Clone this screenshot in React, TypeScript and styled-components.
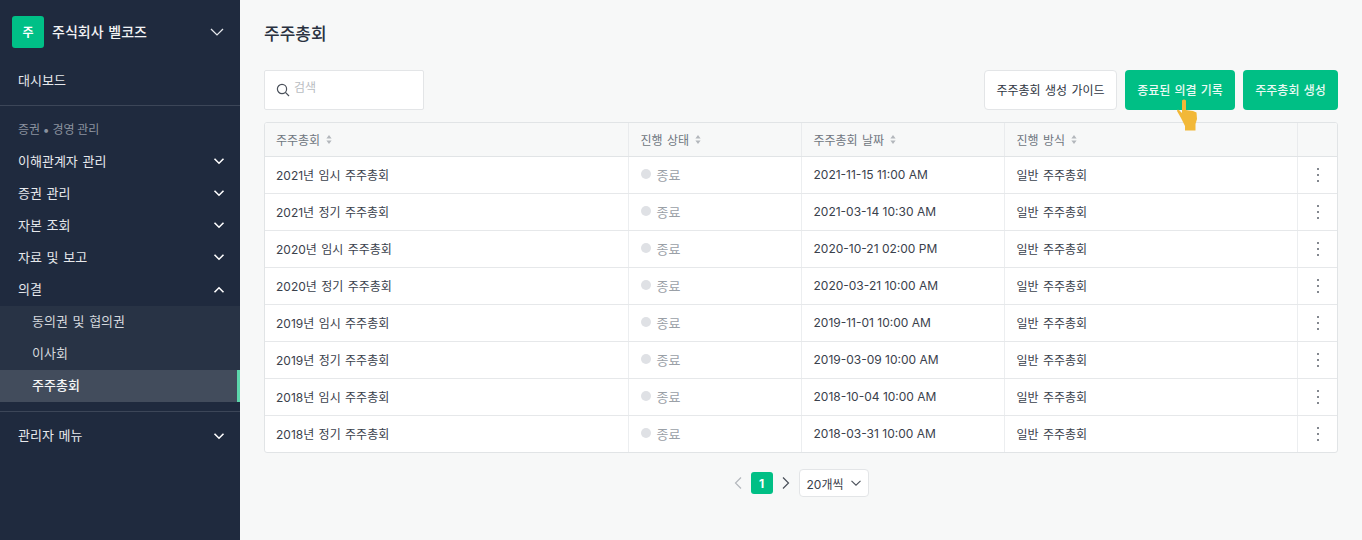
import React from "react";
import styled, { createGlobalStyle } from "styled-components";

const Global = createGlobalStyle`
  html, body { margin: 0; padding: 0; height: 100%; }
  body { background: #f7f8f8; font-family: Inter, "Noto Sans CJK KR", "Noto Sans", sans-serif; overflow: hidden; word-spacing: 1px; }
  * { box-sizing: border-box; }
`;

const Page = styled.div`
  display: flex;
  width: 1362px;
  height: 540px;
  overflow: hidden;
`;

const Sidebar = styled.aside`
  width: 240px;
  flex: none;
  background: #1f2a3e;
  color: #fff;
  display: flex;
  flex-direction: column;
`;

const Brand = styled.div`
  height: 64px;
  padding: 0 15px 0 12px;
  display: flex;
  align-items: center;
`;

const BrandMark = styled.div`
  width: 32px;
  height: 32px;
  border-radius: 3px;
  background: #00c087;
  color: #fff;
  font-size: 12px;
  font-weight: 700;
  padding-bottom: 2px;
  display: flex;
  align-items: center;
  justify-content: center;
`;

const BrandName = styled.div`
  margin-left: 8px;
  flex: 1;
  font-size: 14px;
  font-weight: 500;
  color: #f2f3f5;
  padding-bottom: 3px;
`;

const MenuRow = styled.div<{ $h?: number; $gap?: number }>`
  height: ${(p) => p.$h ?? 32}px;
  margin-bottom: ${(p) => p.$gap ?? 0}px;
  padding: 0 15px 2px 18px;
  display: flex;
  align-items: center;
  justify-content: space-between;
  font-size: 13px;
  color: #e6e8ec;
  svg { margin-top: 2px; }
`;

const Divider = styled.div`
  height: 1px;
  background: #3c4658;
`;

const GroupLabel = styled.div`
  height: 39px;
  padding-top: 15px;
  padding-left: 18px;
  font-size: 12px;
  line-height: 18px;
  color: #8b929e;
  word-spacing: -0.6px;
`;

const SubPanel = styled.div`
  background: #283345;
  margin-bottom: 9px;
`;

const SubRow = styled.div<{ $active?: boolean }>`
  height: 32px;
  padding-left: 32px;
  padding-bottom: 4px;
  display: flex;
  align-items: center;
  font-size: 13px;
  font-weight: ${(p) => (p.$active ? 500 : 400)};
  color: ${(p) => (p.$active ? "#f5f6f7" : "#d5d8dd")};
  background: ${(p) => (p.$active ? "#424c5c" : "transparent")};
  border-right: ${(p) => (p.$active ? "3px solid #5cd6ab" : "none")};
`;

const Main = styled.main`
  flex: 1;
  padding: 0 24px;
  min-width: 0;
`;

const Title = styled.h1`
  margin: 0;
  height: 70px;
  padding-top: 21px;
  font-size: 17px;
  line-height: 26px;
  font-weight: 500;
  color: #2a3240;
`;

const Toolbar = styled.div`
  height: 40px;
  display: flex;
  align-items: center;
  justify-content: space-between;
  margin-bottom: 12px;
`;

const Search = styled.div`
  width: 160px;
  height: 40px;
  background: #fff;
  border: 1px solid #e3e5e7;
  border-radius: 2px;
  padding: 0 0 0 11px;
  display: flex;
  align-items: center;
`;

const Placeholder = styled.span`
  margin-left: 4px;
  margin-top: -7px;
  font-size: 12px;
  color: #b9bdc2;
`;

const Actions = styled.div`
  display: flex;
  gap: 8px;
`;

const Button = styled.div<{ $primary?: boolean; $w: number }>`
  position: relative;
  width: ${(p) => p.$w}px;
  height: 40px;
  border-radius: 4px;
  display: flex;
  align-items: center;
  justify-content: center;
  font-size: 12px;
  white-space: nowrap;
  padding-bottom: 2px;
  font-weight: ${(p) => (p.$primary ? 500 : 400)};
  color: ${(p) => (p.$primary ? "#eafaf4" : "#2f3642")};
  background: ${(p) => (p.$primary ? "#00bf85" : "#fff")};
  border: ${(p) => (p.$primary ? "none" : "1px solid #e3e5e7")};
`;

const Cursor = styled.svg`
  position: absolute;
  left: 51px;
  top: 29px;
  width: 22px;
  height: 32px;
`;

const TableWrap = styled.div`
  border: 1px solid #e1e4e6;
  border-radius: 3px;
  overflow: hidden;
  background: #fff;
  width: 1074px;
`;

const Table = styled.table`
  width: 1072px;
  border-collapse: collapse;
  table-layout: fixed;
`;

const Th = styled.th`
  height: 33px;
  padding: 0 0 0 12px;
  background: #f7f8f8;
  text-align: left;
  font-size: 12px;
  font-weight: 400;
  color: #6f7680;
  border-bottom: 1px solid #e1e4e6;
  border-right: 1px solid #e9ebed;
  &:first-child { padding-left: 11px; }
  &:last-child { border-right: none; }
`;

const Td = styled.td`
  height: 37px;
  padding: 0 0 1px 12px;
  font-size: 12px;
  color: #3a414c;
  border-bottom: 1px solid #e6e8ea;
  border-right: 1px solid #eceef0;
  white-space: nowrap;
  &:first-child { padding-left: 11px; }
  &:last-child { border-right: none; padding: 0 0 0 1px; }
  tr:last-child & { border-bottom: none; }
`;

const DateText = styled.span`
  word-spacing: 0;
`;

const HeadLabel = styled.span`
  display: inline-flex;
  align-items: center;
  gap: 6px;
`;

const Status = styled.span`
  display: inline-flex;
  align-items: center;
  gap: 6px;
  font-size: 13px;
  color: #9aa0a7;
`;

const Dot = styled.span`
  width: 10px;
  height: 10px;
  border-radius: 50%;
  background: #dfe1e5;
`;

const MoreCell = styled.div`
  display: flex;
  justify-content: center;
`;

const Pager = styled.div`
  margin-top: 16px;
  display: flex;
  align-items: center;
  justify-content: center;
  height: 28px;
  padding-right: 2px;
`;

const PageNum = styled.div`
  width: 22px;
  height: 22px;
  margin: 0 7px;
  border-radius: 3px;
  background: #00bf85;
  color: #fff;
  font-size: 12px;
  font-weight: 700;
  display: flex;
  align-items: center;
  justify-content: center;
`;

const PageSize = styled.div`
  margin-left: 7px;
  width: 70px;
  height: 28px;
  background: #fff;
  border: 1px solid #e3e5e7;
  border-radius: 4px;
  padding: 0 6px 0 7px;
  display: flex;
  align-items: center;
  justify-content: space-between;
  font-size: 12px;
  color: #3a414c;
  word-spacing: 0;
`;

const Chevron = ({ up, size = 12, color = "#fff", w = 1.6 }: { up?: boolean; size?: number; color?: string; w?: number }) => (
  <svg width={size} height={size} viewBox="0 0 12 12" fill="none">
    <path d={up ? "M1.5 8.2L6 3.8l4.5 4.4" : "M1.5 3.8L6 8.2l4.5-4.4"} stroke={color} strokeWidth={w} />
  </svg>
);

const SortIcon = () => (
  <svg width="6" height="9" viewBox="0 0 6 9">
    <path d="M3 0l2.6 3.4H.4z M3 9L.4 5.6h5.2z" fill="#b3b7bc" />
  </svg>
);

const More = () => (
  <svg width="4" height="16" viewBox="0 0 4 16">
    <circle cx="2" cy="2" r="1" fill="#5b616a" />
    <circle cx="2" cy="8" r="1" fill="#5b616a" />
    <circle cx="2" cy="14" r="1" fill="#5b616a" />
  </svg>
);

const rows = [
  ["2021년 임시 주주총회", "2021-11-15 11:00 AM"],
  ["2021년 정기 주주총회", "2021-03-14 10:30 AM"],
  ["2020년 임시 주주총회", "2020-10-21 02:00 PM"],
  ["2020년 정기 주주총회", "2020-03-21 10:00 AM"],
  ["2019년 임시 주주총회", "2019-11-01 10:00 AM"],
  ["2019년 정기 주주총회", "2019-03-09 10:00 AM"],
  ["2018년 임시 주주총회", "2018-10-04 10:00 AM"],
  ["2018년 정기 주주총회", "2018-03-31 10:00 AM"],
];

const menus = ["이해관계자 관리", "증권 관리", "자본 조회", "자료 및 보고"];
const heads = ["주주총회", "진행 상태", "주주총회 날짜", "진행 방식"];

export default function App() {
  return (
    <Page>
      <Global />
      <Sidebar>
        <Brand>
          <BrandMark>주</BrandMark>
          <BrandName>주식회사 벨코즈</BrandName>
          <Chevron size={16} w={1} color="#e6e8ec" />
        </Brand>
        <MenuRow $gap={9}>대시보드</MenuRow>
        <Divider />
        <GroupLabel>증권 • 경영 관리</GroupLabel>
        {menus.map((m) => (
          <MenuRow key={m}>
            {m}
            <Chevron />
          </MenuRow>
        ))}
        <MenuRow $h={33}>
          의결
          <Chevron up />
        </MenuRow>
        <SubPanel>
          <SubRow>동의권 및 협의권</SubRow>
          <SubRow>이사회</SubRow>
          <SubRow $active>주주총회</SubRow>
        </SubPanel>
        <Divider />
        <MenuRow $h={47}>
          관리자 메뉴
          <Chevron />
        </MenuRow>
      </Sidebar>
      <Main>
        <Title>주주총회</Title>
        <Toolbar>
          <Search>
            <svg width="14" height="14" viewBox="0 0 14 14" fill="none">
              <circle cx="6" cy="6" r="4.6" stroke="#4a505a" strokeWidth="1.2" />
              <path d="M9.4 9.4L13 13" stroke="#4a505a" strokeWidth="1.2" />
            </svg>
            <Placeholder>검색</Placeholder>
          </Search>
          <Actions>
            <Button $w={133}>주주총회 생성 가이드</Button>
            <Button $primary $w={110}>
              종료된 의결 기록
              <Cursor viewBox="0 0 22 32">
                <path
                  d="M6 1.5Q8-.5 10 1.5V11l3 .5 4 .5 3.5 1.5.5 6.5-1.5 5v6.5H9V27L5 19 1 12q0-2 2-1l3 3z"
                  fill="#f2b838"
                />
              </Cursor>
            </Button>
            <Button $primary $w={95}>주주총회 생성</Button>
          </Actions>
        </Toolbar>
        <TableWrap>
          <Table>
            <colgroup>
              <col style={{ width: 363 }} />
              <col style={{ width: 173 }} />
              <col style={{ width: 203 }} />
              <col style={{ width: 293 }} />
              <col style={{ width: 40 }} />
            </colgroup>
            <thead>
              <tr>
                {heads.map((h) => (
                  <Th key={h}>
                    <HeadLabel>
                      {h}
                      <SortIcon />
                    </HeadLabel>
                  </Th>
                ))}
                <Th />
              </tr>
            </thead>
            <tbody>
              {rows.map(([name, date]) => (
                <tr key={name}>
                  <Td>{name}</Td>
                  <Td>
                    <Status>
                      <Dot />
                      종료
                    </Status>
                  </Td>
                  <Td>
                    <DateText>{date}</DateText>
                  </Td>
                  <Td>일반 주주총회</Td>
                  <Td>
                    <MoreCell>
                      <More />
                    </MoreCell>
                  </Td>
                </tr>
              ))}
            </tbody>
          </Table>
        </TableWrap>
        <Pager>
          <svg width="12" height="14" viewBox="0 0 12 14" fill="none">
            <path d="M9 1.5L3.5 7 9 12.5" stroke="#b4b8bd" strokeWidth="1.2" />
          </svg>
          <PageNum>1</PageNum>
          <svg width="12" height="14" viewBox="0 0 12 14" fill="none">
            <path d="M3 1.5L8.5 7 3 12.5" stroke="#4a505a" strokeWidth="1.2" />
          </svg>
          <PageSize>
            20개씩
            <Chevron color="#4a505a" w={1.1} />
          </PageSize>
        </Pager>
      </Main>
    </Page>
  );
}
